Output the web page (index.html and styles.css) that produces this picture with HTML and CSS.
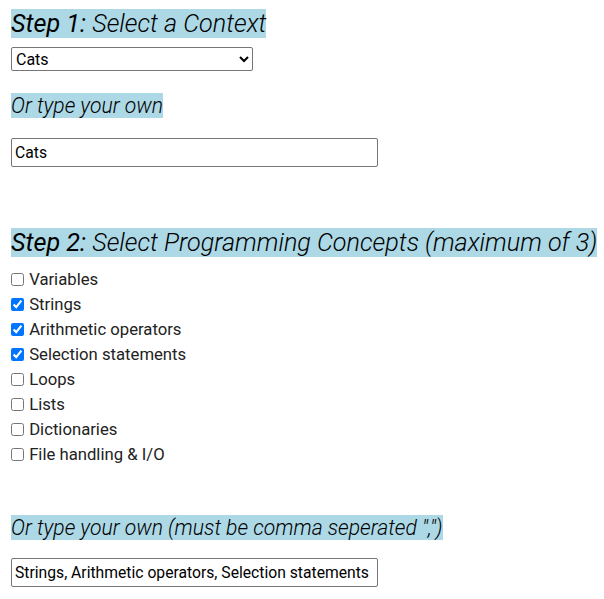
FILE: index.html
```html
<!DOCTYPE html>
<html>
<head>
<meta charset="utf-8">
<link rel="stylesheet" href="styles.css">
</head>
<body>
<div class="page">
  <h1 class="heading"><span class="step">Step 1:</span> Select a Context</h1>
  <div class="row-select">
    <select class="select">
      <option>Cats</option>
      <option>Dogs</option>
    </select>
  </div>
  <h2 class="sub sub-first">Or type your own</h2>
  <div class="row-input">
    <input class="text" type="text" value="Cats">
  </div>

  <h1 class="heading heading-second"><span class="step">Step 2:</span> Select Programming Concepts (maximum of 3)</h1>
  <div class="checks">
    <label class="check"><input type="checkbox"> Variables</label>
    <label class="check"><input type="checkbox" checked> Strings</label>
    <label class="check"><input type="checkbox" checked> Arithmetic operators</label>
    <label class="check"><input type="checkbox" checked> Selection statements</label>
    <label class="check"><input type="checkbox"> Loops</label>
    <label class="check"><input type="checkbox"> Lists</label>
    <label class="check"><input type="checkbox"> Dictionaries</label>
    <label class="check"><input type="checkbox"> File handling &amp; I/O</label>
  </div>
  <h2 class="sub sub-second">Or type your own (must be comma seperated ",")</h2>
  <div class="row-input row-input-last">
    <input class="text" type="text" value="Strings, Arithmetic operators, Selection statements">
  </div>
</div>
</body>
</html>
```

FILE: styles.css
```css
html, body {
  margin: 0;
  padding: 0;
  background: #ffffff;
}
body {
  font-family: Roboto, "Liberation Sans", sans-serif;
  color: #000;
}
.page {
  padding: 9px 11px;
  display: flex;
  flex-direction: column;
  align-items: flex-start;
}
.heading {
  margin: 0;
  font-size: 25.2px;
  line-height: 29px;
  font-style: italic;
  font-weight: 300;
  background: #add8e6;
  white-space: nowrap;
}
.step {
  font-weight: 400;
}
.heading-second {
  margin-top: 61px;
}
.row-select {
  margin-top: 9px;
}
.select {
  width: 242px;
  height: 24px;
  font-family: Roboto, "Liberation Sans", sans-serif;
  font-size: 16px;
  border: 1px solid #767676;
  border-radius: 2px;
  background: #fff;
  color: #000;
  padding: 0;
  margin: 0;
}
.sub {
  margin: 0;
  font-size: 21.15px;
  line-height: 25px;
  font-style: italic;
  font-weight: 300;
  background: #add8e6;
  white-space: nowrap;
}
.sub-first {
  margin-top: 22px;
}
.sub-second {
  margin-top: 48px;
}
.row-input {
  margin-top: 20px;
}
.row-input-last {
  margin-top: 18px;
}
.text {
  box-sizing: border-box;
  width: 367px;
  height: 29px;
  font-family: Roboto, "Liberation Sans", sans-serif;
  font-size: 15.7px;
  border: 1px solid #767676;
  border-radius: 2px;
  padding: 0 3px;
  margin: 0;
  color: #000;
}
.checks {
  margin-top: 10px;
  display: flex;
  flex-direction: column;
}
.check {
  height: 25px;
  display: flex;
  align-items: center;
  font-size: 16.7px;
  color: #222;
  white-space: pre;
}
.check input {
  margin: 0 1px 0 0;
  width: 13px;
  height: 13px;
}
```
